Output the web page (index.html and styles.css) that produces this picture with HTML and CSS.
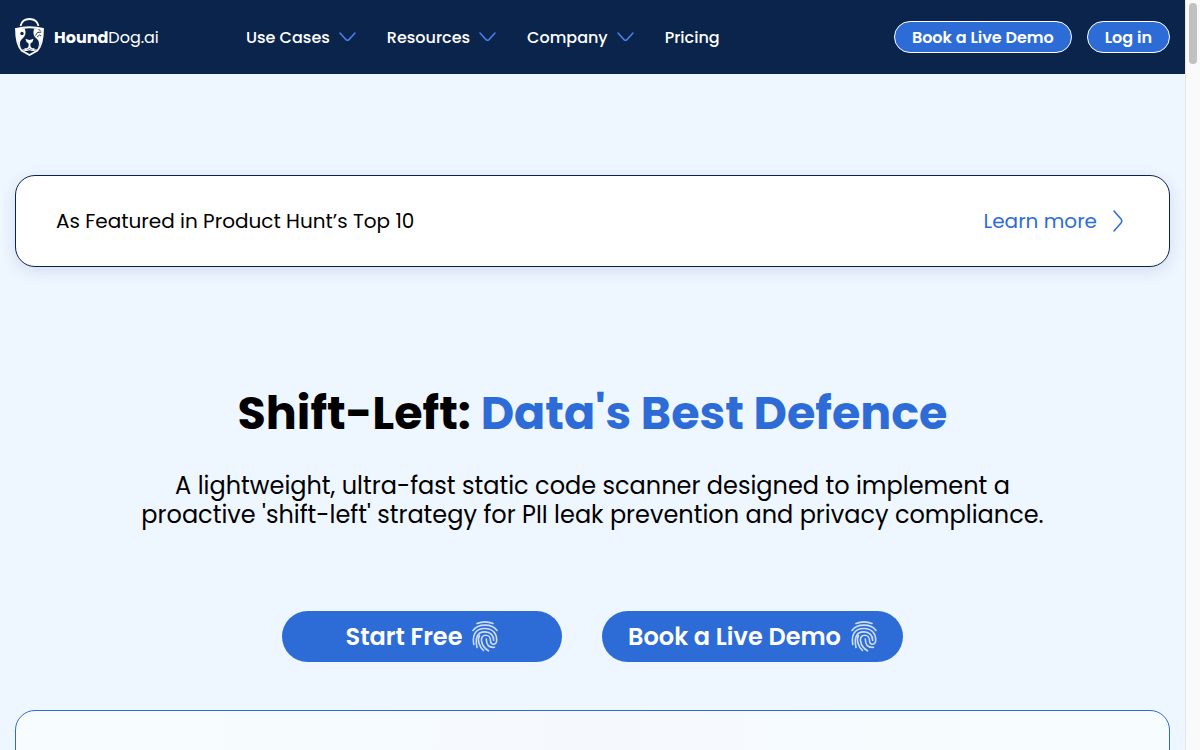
FILE: index.html
```html
<!DOCTYPE html>
<html lang="en">
<head>
<meta charset="utf-8">
<meta name="viewport" content="width=device-width, initial-scale=1">
<title>HoundDog.ai</title>
<link rel="stylesheet" href="styles.css">
</head>
<body>
<svg class="defs" aria-hidden="true">
  <symbol id="down" viewBox="0 0 17 10"><path d="M1 1 L7 7.6 Q8.500 9 10 7.600 L16 1" fill="none" stroke="currentColor" stroke-width="1.500" stroke-linecap="round"/></symbol>
  <symbol id="print" viewBox="0 0 26 31">
    <g fill="none" stroke="currentColor" stroke-width="1.600" stroke-linecap="round">
      <path d="M5 2.500 Q13 -.7 21 2.500"/>
      <path d="M1 9.500 C6 2.300 20 2.300 25 9.500"/>
      <path d="M1.800 23.500 C.3 15 2.500 7.500 13 7.500 C21 7.500 25 13 24.700 19.500 C24.300 24.500 18.500 24.300 18.500 19.500 C18.500 16.500 16.500 14.300 13.700 14.300 C7 14.300 8.500 25 16.500 29.800"/>
      <path d="M5 26.500 C3.300 18.500 4 10.900 13 10.900 C18.500 10.900 21.800 14.500 21.700 19.500"/>
      <path d="M11.500 29.500 C6.800 25.500 5.200 18 7.500 14.500"/>
      <path d="M14.300 18 C14.300 24 17 27 22.500 26.300"/>
    </g>
  </symbol>
</svg>
<div class="window">
  <div class="page">
    <header class="topbar">
      <a class="brand" href="#">
        <svg class="logo" viewBox="0 0 29 38" aria-hidden="true">
          <g fill="none" stroke="#fff" stroke-width="1.800">
            <path d="M5.500 8 C6.500 3.500 9.500 1 14.500 1 C19.500 1 22.500 3.500 23.500 8"/>
            <path d="M1 10.800 Q14.500 7.700 28 10.800 C28 19 26.500 28 22.500 32.500 L14.500 37 L6.500 32.500 C2.500 28 1 19 1 10.800Z"/>
            <path d="M14.500 23 L14.500 27.500 C14.500 30 12 31.500 9.500 31 M14.500 27.500 C14.500 30 17 31.500 19.500 31"/>
            <path d="M7.500 31.500 Q11 33.500 14.500 31.500 Q18 33.500 21.500 31.500" stroke-width="1.200"/>
          </g>
          <path d="M1 11 L9.500 10.500 C11.500 14 10.500 18 7.500 20.500 C4.500 23 4.500 26 6 30 C3 26 1 18 1 11Z M28 11 L19.500 10.500 C17.500 14 18.500 18 21.500 20.500 C24.500 23 24.500 26 23 30 C26 26 28 18 28 11Z M10.500 20.800 Q14.500 23 18.500 20.800 L17.500 24 L14.500 26 L11.500 24Z" fill="#fff"/>
          <circle cx="7" cy="15.500" r="1.700" fill="#0b244c"/>
          <path d="M20.500 17.500 L22.500 14.500 L26.500 14 M22 19 L24.500 17 L26 18 M23.500 11.500 L25.500 12.500" fill="none" stroke="#0b244c" stroke-width=".9"/>
        </svg>
        <span><b>Hound</b>Dog.ai</span>
      </a>
      <nav class="menu" aria-label="Main">
        <button type="button">Use Cases <svg class="down" aria-hidden="true"><use href="#down"/></svg></button>
        <button type="button">Resources <svg class="down" aria-hidden="true"><use href="#down"/></svg></button>
        <button type="button">Company <svg class="down" aria-hidden="true"><use href="#down"/></svg></button>
        <a href="#">Pricing</a>
      </nav>
      <div class="account">
        <a class="pill" href="#">Book a Live Demo</a>
        <a class="pill" href="#">Log in</a>
      </div>
    </header>
    <main class="content">
      <section class="feature">
        <p>As Featured in Product Hunt’s Top 10</p>
        <a class="more" href="#">Learn more
          <svg class="right" viewBox="0 0 10 22" aria-hidden="true"><path d="M1 1 L8 9 Q9.500 11 8 13 L1 21" fill="none" stroke="currentColor" stroke-width="1.500" stroke-linecap="round"/></svg>
        </a>
      </section>
      <section class="hero">
        <h1>Shift-Left: <span>Data's Best Defence</span></h1>
        <p>A lightweight, ultra-fast static code scanner designed to implement a<br>proactive 'shift-left' strategy for PII leak prevention and privacy compliance.</p>
        <div class="actions">
          <a class="cta" href="#">Start Free <svg class="print" aria-hidden="true"><use href="#print"/></svg></a>
          <a class="cta wide" href="#">Book a Live Demo <svg class="print" aria-hidden="true"><use href="#print"/></svg></a>
        </div>
      </section>
      <section class="preview"></section>
    </main>
  </div>
  <div class="rail" aria-hidden="true"><div class="thumb"></div></div>
</div>
</body>
</html>
```
FILE: styles.css
```css
* { box-sizing: border-box; }
body { margin: 0; font-family: Poppins, Inter, "Open Sans", sans-serif; background: #eef6ff; color: #000; }
a { color: inherit; text-decoration: none; }
p, h1 { margin: 0; }
svg { display: block; flex: none; }
.defs { display: none; }
.window { display: flex; height: 100vh; overflow: hidden; }
.page { flex: 1; min-width: 0; display: flex; flex-direction: column; }
.topbar { display: flex; align-items: center; flex: none; height: 74px; padding: 0 15px; background: #0b244c; color: #fff; font-size: 16px; font-weight: 500; white-space: nowrap; }
.brand { display: flex; align-items: center; gap: 10px; width: 231px; font-weight: 400; }
.logo { width: 29px; height: 38px; }
.menu { display: flex; align-items: center; gap: 31px; }
.menu button { display: flex; align-items: center; gap: 9px; padding: 0; border: 0; background: none; color: inherit; font: inherit; }
.down { width: 17px; height: 10px; color: #4a7fe8; }
.account { display: flex; gap: 15px; margin-left: auto; }
.pill { padding: 1px 17px 0; border: 1px solid #fff; border-radius: 16px; background: #2d6cd6; line-height: 29px; font-weight: 600; }
.content { display: flex; flex-direction: column; flex: 1; min-height: 0; padding: 101px 15px 0; }
.feature { display: flex; align-items: center; justify-content: space-between; flex: none; height: 92px; padding: 0 46px 0 40px; border: 1px solid #0b244c; border-radius: 20px; background: #fff; box-shadow: 0 4px 16px rgba(30, 50, 120, .12); font-size: 20px; }
.more { display: flex; align-items: center; gap: 16px; color: #2d6cd6; }
.right { width: 10px; height: 22px; }
.hero { flex: none; padding-top: 116px; text-align: center; }
.hero h1 { font-size: 46px; line-height: 60px; font-weight: 700; }
.hero h1 span { color: #2d6cd6; }
.hero p { margin-top: 28px; font-size: 24px; line-height: 29px; }
.actions { display: flex; justify-content: center; gap: 40px; margin-top: 82px; }
.cta { display: flex; align-items: center; justify-content: center; gap: 10px; width: 280px; height: 51px; border-radius: 26px; background: #2d6cd6; color: #fff; font-size: 24px; font-weight: 600; white-space: nowrap; }
.wide { width: 301px; }
.print { width: 26px; height: 31px; color: #cfdef8; }
.preview { flex: none; height: 500px; margin-top: 48px; border: 1px solid #2d6cd6; border-radius: 20px; background: linear-gradient(90deg, #f7fdff, #f5f9fe 50%, #f7fdff); }
.rail { flex: none; width: 15px; padding: 3px 3px 0; border-left: 1px solid #e7e7e7; background: #fafafa; }
.thumb { width: 8px; height: 61px; border-radius: 4px; background: #c1c1c1; }
```
